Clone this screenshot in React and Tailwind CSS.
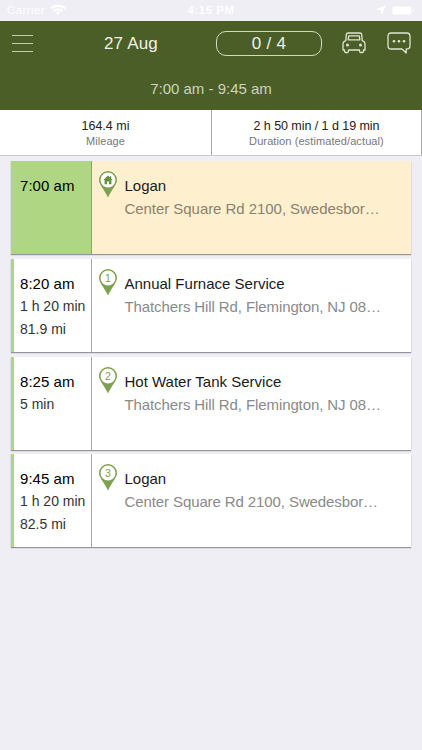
const stops = [
  {
    time: "7:00 am",
    details: [],
    title: "Logan",
    address: "Center Square Rd 2100, Swedesbor…",
    marker: "home",
    active: true,
  },
  {
    time: "8:20 am",
    details: ["1 h 20 min", "81.9 mi"],
    title: "Annual Furnace Service",
    address: "Thatchers Hill Rd, Flemington, NJ 08…",
    marker: "1",
  },
  {
    time: "8:25 am",
    details: ["5 min"],
    title: "Hot Water Tank Service",
    address: "Thatchers Hill Rd, Flemington, NJ 08…",
    marker: "2",
  },
  {
    time: "9:45 am",
    details: ["1 h 20 min", "82.5 mi"],
    title: "Logan",
    address: "Center Square Rd 2100, Swedesbor…",
    marker: "3",
  },
];

function StatusBar() {
  return (
    <div className="grid h-[20.5px] grid-cols-3 items-center px-[7px] text-[11.5px] leading-none text-white">
      <div className="flex items-center gap-[5px]">
        <span className="tracking-[0.4px]">Carrier</span>
        <svg width="16" height="12" viewBox="0 0 16 12" fill="none" stroke="#fff" strokeWidth="2">
          <path d="M1 4.6a10 10 0 0 1 14 0M3.6 7.4a6.2 6.2 0 0 1 8.8 0" />
          <path d="M8 11.2 5.9 9a3 3 0 0 1 4.2 0z" fill="#fff" stroke="none" />
        </svg>
      </div>
      <span className="text-center font-bold tracking-[0.5px]">4:15 PM</span>
      <div className="flex items-center justify-end gap-[6px]">
        <svg width="10" height="10" viewBox="0 0 10 10" fill="#fff">
          <path d="M10 0 5.6 10 4.8 5.2 0 4.4z" />
        </svg>
        <svg width="23" height="10" viewBox="0 0 23 10" fill="#fff">
          <rect x=".5" y="1.5" width="19" height="8" rx="2" />
          <rect x="21" y="4" width="1.2" height="3" rx=".6" />
        </svg>
      </div>
    </div>
  );
}

function CarIcon() {
  return (
    <svg width="24" height="22" viewBox="0 0 24 22" fill="none" stroke="#dfe5cf" strokeWidth="1.3" strokeLinejoin="round">
      <path d="M3.8 8.600 4.300 2.600Q4.500 1 6 1h12q1.500 0 1.700 1.600l.5 6q2.800 1 2.800 3.400V18h-1.500v1q0 1.500-1 1.500h-2q-1 0-1-1.500v-1h-11v1q0 1.500-1 1.500h-2q-1 0-1-1.500v-1H1v-6q0-2.400 2.800-3.400z" />
      <path d="M6.200 7.800 6.700 3.800h10.600l.5 4z" />
      <circle cx="5.500" cy="13" r="1.500" fill="#dfe5cf" stroke="none" />
      <circle cx="18.500" cy="13" r="1.500" fill="#dfe5cf" stroke="none" />
    </svg>
  );
}

function ChatIcon() {
  return (
    <svg width="24" height="22" viewBox="0 0 24 22" fill="none" stroke="#dfe5cf" strokeWidth="1.3" strokeLinejoin="round">
      <path d="M4.200 1h15.600Q23 1 23 4.200v9.600q0 3.200-3.200 3.200h-.6v4l-4.200-4H4.200Q1 17 1 13.800V4.200Q1 1 4.200 1z" />
      <g fill="#dfe5cf" stroke="none">
        <circle cx="7" cy="9.300" r="1.300" />
        <circle cx="12" cy="9.300" r="1.300" />
        <circle cx="17" cy="9.300" r="1.300" />
      </g>
    </svg>
  );
}

function Header() {
  return (
    <header className="h-[89.5px] bg-[#4b5e27]">
      <div className="flex h-[46px] items-center pr-[11px] pl-3">
        <div className="flex w-[21px] flex-col gap-[7px]">
          <div className="h-px bg-[#c3cbb0]" />
          <div className="h-px bg-[#c3cbb0]" />
          <div className="h-px bg-[#c3cbb0]" />
        </div>
        <h1 className="ml-[71px] w-[112px] text-[17px] tracking-[0.15px] text-[#eef1e6]">27 Aug</h1>
        <div className="flex h-[25px] w-[106px] items-center justify-center rounded-[10px] border border-[#d3dabf] text-[17px] tracking-[0.3px] text-[#eef1e6]">
          0 / 4
        </div>
        <div className="ml-5 flex gap-[21px] pb-[2px]">
          <CarIcon />
          <ChatIcon />
        </div>
      </div>
      <p className="pt-[10px] text-center text-[15px] leading-6 text-[#ccd3bc]">7:00 am - 9:45 am</p>
    </header>
  );
}

function Summary() {
  return (
    <div className="flex h-[46px] border-b border-[#c9c8cc] bg-white text-center">
      <div className="w-[211px] pt-[9px]">
        <p className="text-[12.5px] leading-[15px] text-[#222]">164.4 mi</p>
        <p className="text-[11px] leading-[14px] tracking-[0.05px] text-[#777]">Mileage</p>
      </div>
      <div className="w-[211px] border-x border-[#aaa] pt-[9px]">
        <p className="text-[12.5px] leading-[15px] tracking-[-0.05px] text-[#222]">2 h 50 min / 1 d 19 min</p>
        <p className="text-[11px] leading-[14px] tracking-[0.1px] text-[#777]">Duration (estimated/actual)</p>
      </div>
    </div>
  );
}

function Pin({ marker }) {
  return (
    <svg className="shrink-0" width="18" height="27" viewBox="0 0 18 27">
      <path d="M9 0a9 9 0 0 1 9 9c0 4.500-4.500 8-9 17.500C4.500 17 0 13.500 0 9a9 9 0 0 1 9-9z" fill="#7ca150" />
      <circle cx="9" cy="9" r="7.500" fill="#fff" />
      {marker === "home" ? (
        <path d="M9 4.400 4.300 9h1.300v4.200H8v-2.800h2v2.800h2.400V9h1.300l-1.500-1.500V5.200H11v1.100z" fill="#668f3e" />
      ) : (
        <text x="9" y="12.500" fontSize="10.500" textAnchor="middle" fill="#7ca150">
          {marker}
        </text>
      )}
    </svg>
  );
}

function StopCard({ stop }) {
  return (
    <div className="flex h-[93px] shadow-[0_1px_1px_rgba(60,55,65,0.5)]">
      <div
        className={
          stop.active
            ? "w-[81px] border-r border-[#8aa765] bg-[#afd682] pt-[15px] pl-[9px]"
            : "w-[81px] border-r border-l-[3px] border-r-[#aaa] border-l-[#afd682] bg-white pt-[15px] pl-[6px]"
        }
      >
        <p className="mb-px text-[15px] leading-5 tracking-[0.05px] text-black">{stop.time}</p>
        {stop.details.map((detail) => (
          <p key={detail} className="text-[14px] leading-[23px] whitespace-nowrap text-[#333]">
            {detail}
          </p>
        ))}
      </div>
      <div className={stop.active ? "flex flex-1 bg-[#fef0cf] pt-[10px] pl-[7px]" : "flex flex-1 bg-white pt-[10px] pl-[7px]"}>
        <Pin marker={stop.marker} />
        <div className="pt-[5px] pl-[7.5px]">
          <p className="text-[15px] leading-5 whitespace-nowrap text-[#1a1a1a]">{stop.title}</p>
          <p className={stop.active ? "text-[15px] leading-[26px] tracking-[-0.05px] whitespace-nowrap text-[#8b826e]" : "text-[15px] leading-[26px] tracking-[-0.1px] whitespace-nowrap text-[#8a8a8a]"}>
            {stop.address}
          </p>
        </div>
      </div>
    </div>
  );
}

export default function App() {
  return (
    <div className="h-[750px] w-[422px] overflow-hidden bg-[#efeef4] font-['Liberation_Sans',Arial,sans-serif]">
      <StatusBar />
      <Header />
      <Summary />
      <main className="flex flex-col gap-[4.8px] pt-[5px] pr-[11px] pl-[11px]">
        {stops.map((stop) => (
          <StopCard key={stop.marker} stop={stop} />
        ))}
      </main>
    </div>
  );
}
